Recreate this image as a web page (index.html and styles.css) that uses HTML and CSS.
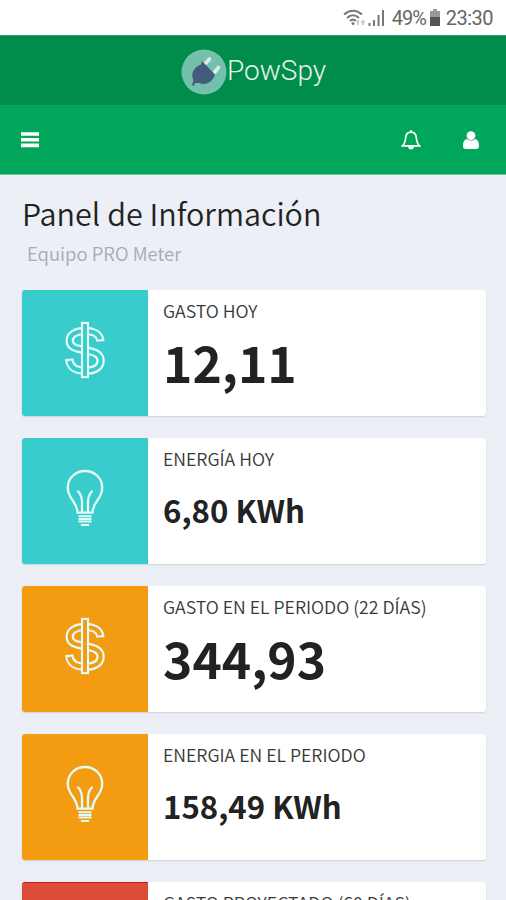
FILE: index.html
```
<!DOCTYPE html>
<html lang="es">
<head>
  <meta charset="UTF-8">
  <meta name="viewport" content="width=device-width, initial-scale=1.0">
  <title>PowSpy</title>
  <link rel="stylesheet" href="styles.css">
</head>
<body>
  <svg class="defs" width="0" height="0">
    <symbol id="dollar" viewBox="0 1.300 70 80">
      <path class="line" stroke-width="8.400" d="M50.300 31.700C50 24.800 44 21.200 35 21.200C26 21.200 19.700 25 19.700 31C19.700 37.500 26 38.800 35 40.500C44 42.200 50.600 44 50.600 51C50.600 57.500 44.500 61 35 61C26 61 19.700 57.500 19.200 49" />
      <path class="cut" stroke-width="4" d="M50 29.600C49 24.300 43.500 21.200 35 21.200C26 21.200 19.700 25 19.700 31C19.700 37.500 26 38.800 35 40.500C44 42.200 50.600 44 50.600 51C50.600 57.500 44.500 61 35 61C26 61 20.300 57.500 19.400 51.200" />
      <rect class="bar" x="32" y="13.200" width="6" height="54.200" />
    </symbol>
    <symbol id="bulb" viewBox="0 -0.700 70 80">
      <path class="line" stroke-width="2.300" d="M27.500 53C27.500 42 17.800 39.500 17.800 28C17.800 18.500 25.500 11.300 35 11.300S52.200 18.500 52.200 28C52.200 39.500 42.500 42 42.500 53Z M32 53V42C32 37 30.500 34 27.500 31 M38 53V42C38 37 39.500 34 42.500 31" />
      <path class="line" stroke-width="2" d="M28.500 56.500H41.500M28.500 59.200H41.500M28.500 61.900H41.500M31 65.200H39" />
    </symbol>
  </svg>

  <div class="status-bar">
    <svg class="wifi" width="24" height="20" viewBox="0 0 24 20">
      <path d="M1 6.500Q10 -1 19 6.500M4 10Q10 4.500 16 10M7 13Q10 10.300 13 13" />
      <circle cx="10" cy="15.500" r="1.500" />
      <path class="soft" d="M15 12V17M20 12V17M18 14H22" />
    </svg>
    <svg class="signal" width="18" height="18" viewBox="0 0 18 18">
      <path d="M1.500 14V17M6 11V17" />
      <path d="M10.500 6V17M15 1V17" />
    </svg>
    <span class="percent">49%</span>
    <svg class="battery" width="12" height="18" viewBox="0 0 12 18">
      <path fill="#999" d="M4 0H8V2H11V9H1V2H4Z" />
      <path fill="#555" d="M1 8H11V17H1Z" />
    </svg>
    <span class="clock">23:30</span>
  </div>

  <header>
    <div class="logo">
      <svg width="46" height="46" viewBox="0 0 46 46">
        <circle cx="23" cy="23" r="22.500" fill="#73c1ac" />
        <path d="M24 15L28.500 10M33 24L37.500 18.500" stroke="#dceee0" stroke-width="3.600" stroke-linecap="round" />
        <path d="M21 12L34 25.500C31.500 33 25 37 18 34L14 34L13 37L11 36L12.500 31C9.500 26 12 18 20 15.500Z" fill="#435b7c" />
      </svg>
      <span>PowSpy</span>
    </div>
    <nav>
      <svg class="menu" width="18" height="16" viewBox="0 0 18 16">
        <path d="M0 2H18M0 7.700H18M0 13.400H18" />
      </svg>
      <svg class="bell" width="20" height="22" viewBox="0 0 20 22">
        <path d="M1.500 16.800C4.200 14.500 4.500 11 4.700 8.500C5 5 7 3.200 10 3.200S15 5 15.300 8.500C15.500 11 15.800 14.500 18.500 16.800Z" />
        <path d="M10 1V3" />
        <path class="clapper" d="M7 17.200H13C13 21.500 7 21.500 7 17.200Z" />
      </svg>
      <svg class="user" width="16" height="18" viewBox="0 0 16 18">
        <circle cx="8" cy="4.600" r="4.400" />
        <path d="M4 8C6.500 10 9.500 10 12 8C15 8.500 16 11 16 15C16 17 15 18 13.500 18H2.500C1 18 0 17 0 15C0 11 1 8.500 4 8Z" />
      </svg>
    </nav>
  </header>

  <main>
    <h1>Panel de Información</h1>
    <p class="subtitle">Equipo PRO Meter</p>

    <div class="info-box aqua">
      <div class="info-icon"><svg width="70" height="80"><use href="#dollar" /></svg></div>
      <div class="info-content">
        <span class="label">GASTO HOY</span>
        <span class="number big">12,11</span>
      </div>
    </div>
    <div class="info-box aqua">
      <div class="info-icon"><svg width="70" height="80"><use href="#bulb" /></svg></div>
      <div class="info-content">
        <span class="label">ENERGÍA HOY</span>
        <span class="number">6,80 KWh</span>
      </div>
    </div>
    <div class="info-box yellow">
      <div class="info-icon"><svg width="70" height="80"><use href="#dollar" /></svg></div>
      <div class="info-content">
        <span class="label">GASTO EN EL PERIODO (22 DÍAS)</span>
        <span class="number big">344,93</span>
      </div>
    </div>
    <div class="info-box yellow">
      <div class="info-icon"><svg width="70" height="80"><use href="#bulb" /></svg></div>
      <div class="info-content">
        <span class="label">ENERGIA EN EL PERIODO</span>
        <span class="number">158,49 KWh</span>
      </div>
    </div>
    <div class="info-box red">
      <div class="info-icon"></div>
      <div class="info-content">
        <span class="label">GASTO PROYECTADO (60 DÍAS)</span>
      </div>
    </div>
  </main>
</body>
</html>
```
FILE: styles.css
```
* {
  box-sizing: border-box;
}
body {
  margin: 0;
  height: 900px;
  overflow: hidden;
  background: #ecf0f6;
  color: #222;
  font-family: "Noto Sans CJK SC", "Open Sans", sans-serif;
}
svg {
  display: block;
  flex-shrink: 0;
}
.defs {
  position: absolute;
}
.status-bar {
  height: 35px;
  background: #fff;
  display: flex;
  align-items: center;
  justify-content: flex-end;
  padding-right: 13px;
  font-family: Roboto, sans-serif;
  font-size: 20px;
  color: #666;
}
.wifi, .signal {
  fill: none;
  stroke: #777;
  stroke-width: 2;
}
.wifi circle {
  fill: #777;
  stroke: none;
}
.wifi .soft {
  stroke: #ccc;
}
.signal {
  margin-left: 1px;
}
.percent {
  margin-left: 6px;
  width: 34px;
  letter-spacing: -1px;
}
.battery {
  margin: 0 5px 0 3px;
}
.clock {
  letter-spacing: -0.5px;
}
.logo {
  height: 70px;
  background: #008d4c;
  border-top: 1px solid #2a9d68;
  display: flex;
  align-items: center;
  justify-content: center;
  padding: 3px 0 0 1px;
  color: #e5f5e6;
  font-family: Roboto, sans-serif;
  font-weight: 300;
  font-size: 28px;
}
.logo span {
  margin-top: -4px;
}
nav {
  height: 70px;
  background: #00a65a;
  border-bottom: 1px solid #66c99a;
  display: flex;
  align-items: center;
  padding: 0 27px 0 21px;
}
.menu {
  margin-right: auto;
  stroke: #fff;
  stroke-width: 3.600;
}
.bell {
  margin-right: 42px;
  fill: none;
  stroke: #fff;
  stroke-width: 1.700;
}
.bell .clapper {
  fill: #fff;
  stroke: none;
}
.user {
  fill: #fff;
}
main {
  padding: 16px 20px 0 22px;
}
h1 {
  margin: 0;
  font-size: 30.500px;
  font-weight: 350;
  line-height: 44px;
}
.subtitle {
  margin: 0 0 18.400px 5px;
  font-size: 18.500px;
  font-weight: 350;
  line-height: 37px;
  color: #a8aaae;
}
.info-box {
  display: flex;
  height: 126px;
  margin-bottom: 21.800px;
  background: #fff;
  border-radius: 3px;
  box-shadow: 0 1px 2px rgba(0,0,0,0.14);
  --tone: #39cccc;
}
.yellow {
  --tone: #f39c12;
}
.red {
  --tone: #dd4b39;
}
.info-icon {
  width: 126px;
  background: var(--tone);
  border-radius: 3px 0 0 3px;
  display: flex;
  align-items: center;
  justify-content: center;
}
.red .info-icon {
  border-top: 1px solid #c51b0b;
}
.info-icon svg {
  margin-bottom: 4px;
}
.line {
  fill: none;
  stroke: #e4fbf8;
}
.cut {
  fill: none;
  stroke: var(--tone);
}
.bar {
  fill: var(--tone);
  stroke: #e4fbf8;
  stroke-width: 2.100;
}
.info-content {
  padding: 6px 0 0 15px;
  white-space: nowrap;
}
.label, .number {
  display: block;
}
.label {
  font-size: 17.700px;
  font-weight: 350;
  line-height: 28px;
  color: #383838;
}
.number {
  font-size: 31.200px;
  font-weight: 700;
  line-height: 75px;
}
.big {
  font-size: 49.800px;
}
```
